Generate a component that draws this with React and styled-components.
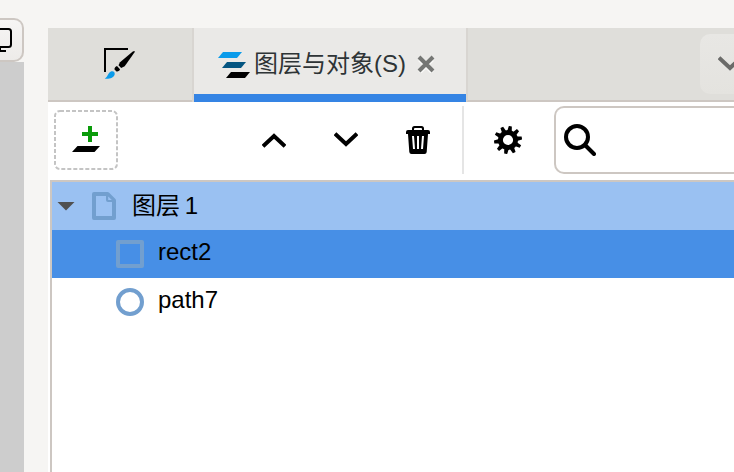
import React from "react";
import styled, { createGlobalStyle } from "styled-components";

const GlobalStyle = createGlobalStyle`
  *, *::before, *::after { box-sizing: border-box; }
  body { margin: 0; overflow: hidden; background: #f6f5f3; }
`;

const Window = styled.div`
  display: flex;
  gap: 24px;
  width: 734px;
  height: 472px;
  overflow: hidden;
  background: #f6f5f3;
  color: #000;
  font: 24px/32px "Liberation Sans", "Noto Sans CJK SC", sans-serif;

  svg { display: block; flex: none; }
`;

const CanvasEdge = styled.div`
  flex: none;
  width: 24px;
  padding-top: 18px;
  display: flex;
  flex-direction: column;
`;

const DisplayButton = styled.button`
  flex: none;
  display: flex;
  align-items: flex-start;
  height: 44px;
  width: 24px;
  padding: 8px 0 0;
  border: 2px solid #cdc7c2;
  border-left: 0;
  border-radius: 0 10px 10px 0;
  background: linear-gradient(#f6f5f4, #edebe9);
`;

const Canvas = styled.div`
  flex: 1;
  background: #cdcdcd;
`;

const Dock = styled.section`
  flex: none;
  width: 686px;
  padding-top: 28px;
  display: flex;
  flex-direction: column;
`;

const TabBar = styled.div`
  flex: none;
  display: flex;
  height: 74px;
  background: #dfdeda;
`;

const Tab = styled.div`
  flex: none;
  display: flex;
  align-items: center;
  width: ${(p) => p.$width}px;
  padding: 0 0 2px ${(p) => p.$inset}px;
  color: #2e3436;
  background: ${(p) => (p.$active ? "#eae9e7" : "transparent")};
  box-shadow: ${(p) =>
    p.$active ? "inset 0 -8px #3584e4" : "inset -2px 0 #d8d5d1, inset 0 -2px #cdc7c2"};
`;

const TabLabel = styled.span`
  margin: 0 11px 0 4px;
  white-space: nowrap;
`;

const TabFill = styled.div`
  flex: 1;
  display: flex;
  justify-content: flex-end;
  padding-top: 6px;
  border-left: 2px solid #d8d5d1;
  border-bottom: 2px solid #cdc7c2;
`;

const MenuButton = styled.button`
  width: 34px;
  height: 60px;
  padding: 0 0 0 18px;
  border: 0;
  border-radius: 10px 0 0 10px;
  background: linear-gradient(#e8e7e4, #e4e3df);
`;

const Toolbar = styled.div`
  flex: none;
  display: flex;
  height: 78px;
  padding: 4px 0 6px 6px;
  background: #fff;
`;

const AddButton = styled.button`
  display: block;
  width: 64px;
  height: 60px;
  margin: 4px 120px 0 0;
  padding: 0;
  border: 0;
  background: none;
`;

const ToolButton = styled.button`
  display: flex;
  align-items: center;
  justify-content: center;
  width: ${(p) => p.$width || 72}px;
  height: 68px;
  padding: 0;
  border: 0;
  background: none;
`;

const Separator = styled.div`
  width: 2px;
  height: 68px;
  margin-left: 8px;
  background: #e5e5e5;
`;

const Search = styled.div`
  flex: 1;
  height: 68px;
  margin-left: 2px;
  padding: 16px 0 0 8px;
  border: 2px solid #cdc7c2;
  border-right: 0;
  border-radius: 10px 0 0 10px;
`;

const ListFrame = styled.div`
  flex: 1;
  padding-left: 2px;
  background: #fff;
`;

const LayerList = styled.div`
  height: 100%;
  border: solid #cdc7c2;
  border-width: 2px 0 0 2px;
`;

const tones = { layer: "#9ac1f2", selected: "#478fe6", plain: "#fff" };

const Row = styled.div`
  display: flex;
  align-items: center;
  height: 48px;
  padding-left: ${(p) => p.$indent}px;
  background: ${(p) => tones[p.$tone]};
`;

const RowLabel = styled.span`
  margin-left: ${(p) => p.$gap}px;
  padding-bottom: ${(p) => p.$lift || 0}px;
  white-space: pre;
`;

const LayerName = styled(RowLabel)`
  word-spacing: -2px;
`;

const Expander = styled.span`
  width: 18px;
  height: 9px;
  margin-right: 17px;
  background: #505050;
  clip-path: polygon(0 0, 100% 0, 50% 100%);
`;

const MonitorIcon = () => (
  <svg width="14" height="26" viewBox="0 0 14 26" fill="none" stroke="#000" strokeWidth="2">
    <path d="M-2 1H8.500Q11 1 11 3.500V16.500Q11 19 8.500 19H-2" />
    <path d="M-2 23H6M0 20V24" />
  </svg>
);

const BrushIcon = () => (
  <svg width="32" height="32" viewBox="0 0 32 32">
    <path d="M1 24V1H24" fill="none" stroke="#000" strokeWidth="2" />
    <path d="M30.300 3C31 3.300 30.700 4 30.400 4.500L20.700 18.200L17.200 19.900L14.500 17.200L16 14.200L28.800 3.400Z" />
    <path d="M13 18L16 21.200C15.700 23 13.500 23.800 12.200 23.200L10.400 21.200C10.400 19.800 11.600 18.300 13 18Z" />
    <path fill="#0a9bea" d="M.7 30.500C3.500 29.700 3.500 25.500 6.500 23.800C9 22.500 11 24 10.700 26.200C10.200 30 4.400 31.200.7 30.500Z" />
  </svg>
);

const LayersIcon = () => (
  <svg width="32" height="28" viewBox="0 -2 32 28">
    <path fill="#0a9bea" d="M5 0H24L19 6H0Z" />
    <path fill="#045581" d="M9 10H28L23 16H4Z" />
    <path d="M13 20H32L27 26H8Z" />
  </svg>
);

const CloseIcon = () => (
  <svg width="18" height="18" viewBox="0 0 18 18" fill="none" strokeWidth="4">
    <path d="M2.600 4.600L15.400 17.400M15.400 4.600L2.600 17.400" stroke="#fafaf9" />
    <path d="M2 2L16 16M16 2L2 16" stroke="#757674" />
  </svg>
);

const Chevron = ({ up, color = "#000" }) => (
  <svg width="24" height="16" viewBox="0 0 24 16" fill="none" stroke={color} strokeWidth="4">
    <path d={up ? "M1 14.300L12 4L23 14.300" : "M1 1.700L12 12L23 1.700"} />
  </svg>
);

const AddLayerIcon = () => (
  <svg width="64" height="60" viewBox="0 0 64 60">
    <rect x="1" y="1" width="62" height="58" rx="5" fill="none" stroke="#c4c4c4" strokeWidth="2" strokeDasharray="4 2" />
    <path fill="#0a9b0a" d="M34 16H38V22H44V26H38V32H34V26H28V22H34Z" />
    <path d="M23.500 36H46L40.500 42H18Z" />
  </svg>
);

const TrashIcon = () => (
  <svg width="24" height="28" viewBox="0 0 24 28">
    <path fillRule="evenodd" d="M2 4H6V2.500Q6 0 8.500 0H15.500Q18 0 18 2.500V4H22Q24 4 24 6V8H22L20.700 26Q20.500 28 18.500 28H5.500Q3.500 28 3.300 26L2 8H0V6Q0 4 2 4ZM8 4H16V3Q16 2 15 2H9Q8 2 8 3ZM6 10L7 23H9L8 10ZM11 10V23H13V10ZM16 10L15 23H17L18 10Z" />
  </svg>
);

const teeth = Array.from({ length: 10 }, (_, i) => i * 36 + 10);

const GearIcon = () => (
  <svg width="28" height="28" viewBox="0 0 28 28">
    <circle cx="14" cy="14" r="7.600" fill="none" stroke="#000" strokeWidth="5" />
    {teeth.map((angle) => (
      <path key={angle} d="M11.600 6L12.400 0H15.400L16.400 6Z" transform={`rotate(${angle} 14 14)`} />
    ))}
  </svg>
);

const SearchIcon = () => (
  <svg width="32" height="32" viewBox="0 0 32 32" fill="none" stroke="#000" strokeWidth="4">
    <circle cx="13" cy="13" r="11" />
    <path d="M21 21L30 30" strokeLinecap="round" />
  </svg>
);

const PageIcon = () => (
  <svg width="24" height="28" viewBox="0 0 24 28">
    <path d="M2 2H15.500L22 8.500V26H2Z" fill="none" stroke="#729fcf" strokeWidth="4" strokeLinejoin="round" />
    <path d="M14 2H16L22 8V10H16Q14 10 14 8Z" fill="#729fcf" />
    <path d="M16.200 4.500V8H19.800Z" fill="#9ac1f2" />
  </svg>
);

const SquareIcon = () => (
  <svg width="28" height="28" viewBox="0 0 28 28">
    <rect x="2" y="2" width="24" height="24" fill="none" stroke="#729fcf" strokeWidth="4" strokeLinejoin="round" />
  </svg>
);

const CircleIcon = () => (
  <svg width="28" height="28" viewBox="0 0 28 28">
    <circle cx="14" cy="14" r="12" fill="none" stroke="#729fcf" strokeWidth="4" />
  </svg>
);

export default function App() {
  return (
    <>
      <GlobalStyle />
      <Window>
        <CanvasEdge>
          <DisplayButton><MonitorIcon /></DisplayButton>
          <Canvas />
        </CanvasEdge>
        <Dock>
          <TabBar>
            <Tab $width={146} $inset={56}><BrushIcon /></Tab>
            <Tab $width={272} $inset={24} $active>
              <LayersIcon />
              <TabLabel>图层与对象(S)</TabLabel>
              <CloseIcon />
            </Tab>
            <TabFill>
              <MenuButton><Chevron color="#6b6b69" /></MenuButton>
            </TabFill>
          </TabBar>
          <Toolbar>
            <AddButton><AddLayerIcon /></AddButton>
            <ToolButton><Chevron up /></ToolButton>
            <ToolButton><Chevron /></ToolButton>
            <ToolButton><TrashIcon /></ToolButton>
            <Separator />
            <ToolButton $width={88}><GearIcon /></ToolButton>
            <Search><SearchIcon /></Search>
          </Toolbar>
          <ListFrame>
            <LayerList>
              <Row $tone="layer" $indent={5}>
                <Expander />
                <PageIcon />
                <LayerName $gap={16}>图层 1</LayerName>
              </Row>
              <Row $tone="selected" $indent={64}>
                <SquareIcon />
                <RowLabel $gap={14} $lift={4}>rect2</RowLabel>
              </Row>
              <Row $tone="plain" $indent={64}>
                <CircleIcon />
                <RowLabel $gap={14} $lift={4}>path7</RowLabel>
              </Row>
            </LayerList>
          </ListFrame>
        </Dock>
      </Window>
    </>
  );
}
